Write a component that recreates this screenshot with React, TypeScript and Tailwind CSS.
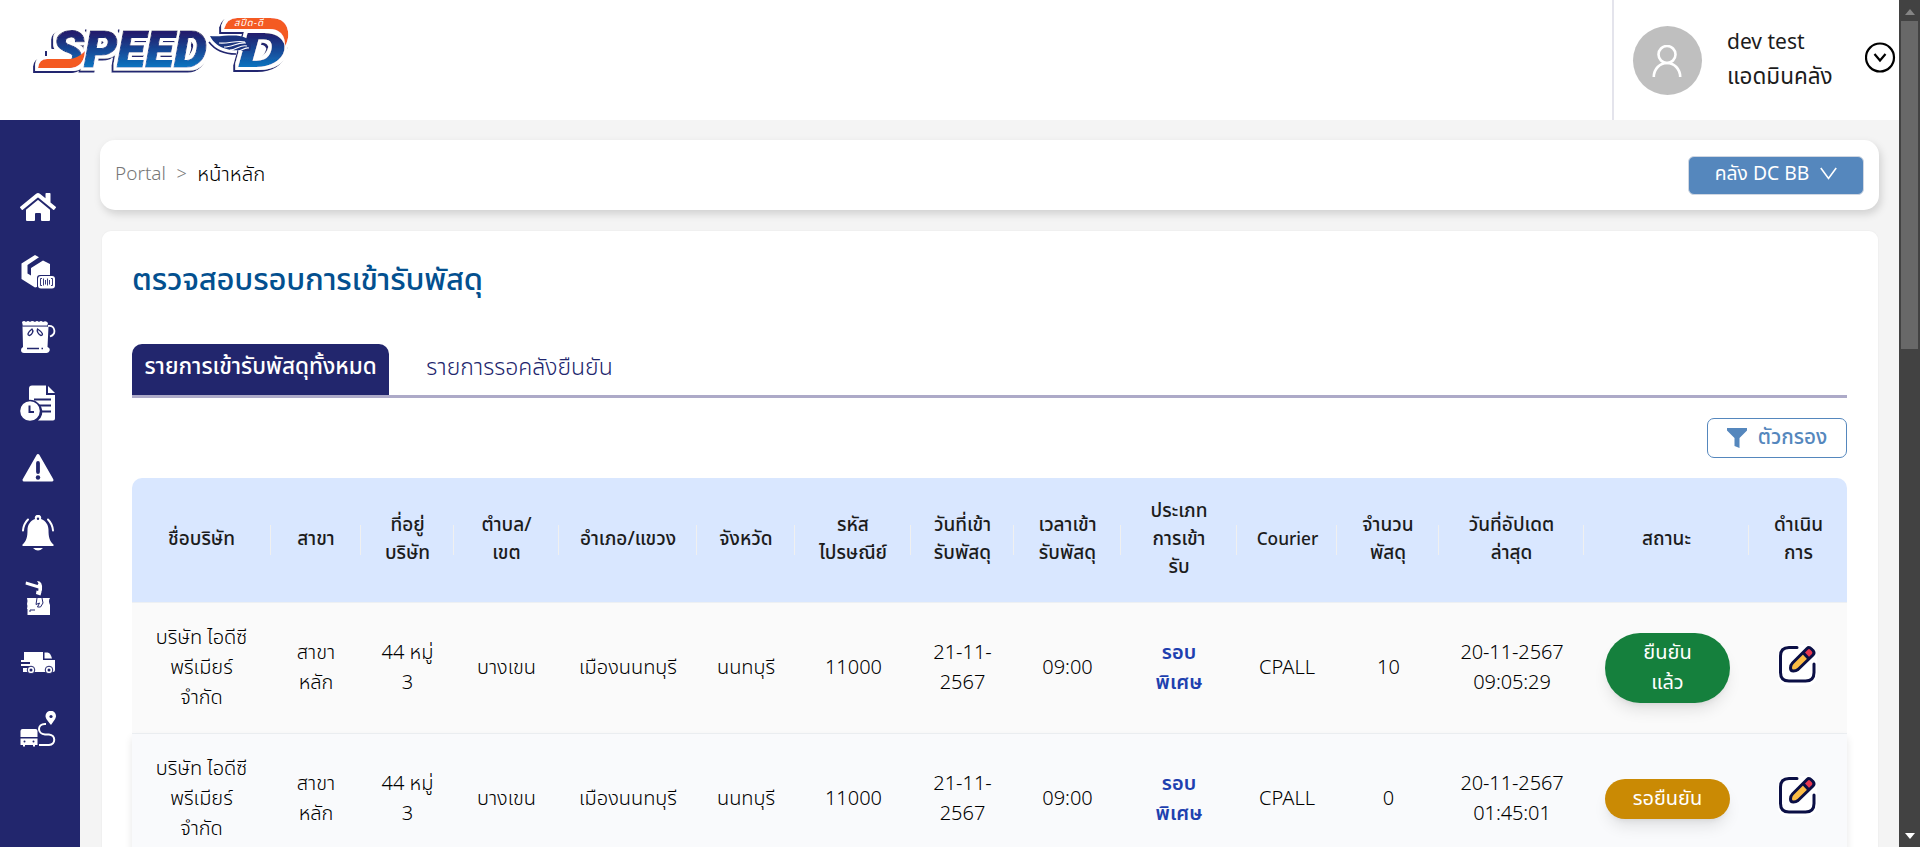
import type { ReactNode } from 'react';
import { FaHome } from 'react-icons/fa';

type Row = { count: string; time: string; status: 'confirmed' | 'waiting' };

const columns: string[][] = [
  ['ชื่อบริษัท'],
  ['สาขา'],
  ['ที่อยู่', 'บริษัท'],
  ['ตำบล/', 'เขต'],
  ['อำเภอ/แขวง'],
  ['จังหวัด'],
  ['รหัส', 'ไปรษณีย์'],
  ['วันที่เข้า', 'รับพัสดุ'],
  ['เวลาเข้า', 'รับพัสดุ'],
  ['ประเภท', 'การเข้า', 'รับ'],
  ['Courier'],
  ['จำนวน', 'พัสดุ'],
  ['วันที่อัปเดต', 'ล่าสุด'],
  ['สถานะ'],
  ['ดำเนิน', 'การ'],
];

const rows: Row[] = [
  { count: '10', time: '09:05:29', status: 'confirmed' },
  { count: '0', time: '01:45:01', status: 'waiting' },
];

const grid =
  'grid grid-cols-[139px_90px_93px_105px_138px_98px_116px_103px_107px_116px_100px_102px_145px_165px_98px]';

function Logo() {
  return (
    <svg width="262" height="66" viewBox="0 0 262 66" className="ml-[33px] mt-[14px]">
      <defs>
        <linearGradient id="blue" x1="0" y1="14" x2="0" y2="54" gradientUnits="userSpaceOnUse">
          <stop offset="0.15" stopColor="#211f6e" />
          <stop offset="1" stopColor="#0c76c2" />
        </linearGradient>
        <filter id="edge" x="-5%" y="-20%" width="110%" height="140%">
          <feMorphology in="SourceAlpha" operator="dilate" radius="3.2" result="wide" />
          <feFlood floodColor="#ffffff" />
          <feComposite in2="wide" operator="in" result="white" />
          <feOffset in="wide" dx="-1.6" dy="2" result="moved" />
          <feFlood floodColor="#22266f" />
          <feComposite in2="moved" operator="in" result="navy" />
          <feMerge>
            <feMergeNode in="navy" />
            <feMergeNode in="white" />
            <feMergeNode in="SourceGraphic" />
          </feMerge>
        </filter>
      </defs>
      <g filter="url(#edge)">
        <g fontFamily="Roboto, Liberation Sans, sans-serif" fontWeight="900" fontStyle="italic" fill="url(#blue)">
          <text x="19" y="53" fontSize="50" textLength="155" lengthAdjust="spacingAndGlyphs" stroke="url(#blue)" strokeWidth="1">SPEED</text>
          <text x="205" y="53" fontSize="48" textLength="48" lengthAdjust="spacingAndGlyphs">D</text>
        </g>
        <path d="M17 38l18 1v7H17z" fill="#fff" />
        <path d="M5 54q1-9 9-9h22q8 0 16-8-1 17-16 17z" fill="#f45a22" />
        <path d="M191 15Q194 4 204 4h33q20 0 18 20-1 5-3 8 0-17-16-17z" fill="#f45a22" />
      </g>
      <path d="M177 22c14 1 26-3 36 2 5 3 6 8 4 13-18 0-33-1-40-15z" fill="#1b3580" />
      <path d="M186 29c9 1 18-3 26-1M191 33c8 0 14-5 22-4M197 36c6 0 11-6 17-4M205 37c4 0 6-4 11-3" stroke="#fff" strokeWidth="1.1" fill="none" />
      <path d="M176 28c6 8 14 12 27 12" stroke="#22266f" strokeWidth="1.600" fill="none" />
      <text x="201" y="12" fontSize="9.500" textLength="29" fill="#fff" fontStyle="italic" fontFamily="Noto Sans Thai, Noto Sans, sans-serif">สปีด-ดี</text>
    </svg>
  );
}

function SideIcon({ children }: { children: ReactNode }) {
  return (
    <svg viewBox="0 0 36 36" className="size-9 fill-white stroke-none">
      {children}
    </svg>
  );
}

function Sidebar() {
  const c = '#22266d';
  return (
    <nav className="flex w-20 shrink-0 flex-col items-center gap-[29.2px] bg-[#22266d] pt-[69px] pr-[5px]">
      <FaHome className="size-9 text-white" />
      <SideIcon>
        <path d="M1.500 9.500 15 1l4 2.200L7.500 11v8.500l3.500 2V14L23 6.500l7 3.500v11H20q-3 0-3 3v9l-2 .5L1.500 25z" />
        <rect x="18" y="22" width="17" height="12.500" rx="3" />
        <path d="M22 24.500h-1.500v7H22M31 24.500h1.500v7H31M23.500 24.500v7M25.500 26v4.500M27.500 24.500v7M29.500 26v4.500" fill="none" stroke={c} strokeWidth="0.900" />
      </SideIcon>
      <SideIcon>
        <path d="M2 3q2-2 4 0 2-2 4 0 2-2 5 0 2-2 4 0 2-2 4 0 3-2 5 1l-1 3.500H3z" />
        <path d="M2.500 7.500h26l-1 20.500q3 1 2 4-1 2-3 2H4q-3 0-3-3 0-2 2-3z" />
        <path d="M3 7h25" stroke={c} strokeWidth="0.900" />
        <path d="M28 7c7-1 9 8 2 10.500" fill="none" stroke="#fff" strokeWidth="1.800" />
        <path d="M12 10c2 2 0 6-2.500 6.500-2.500 0-2-3 2.500-6.500zM17.500 10c-1 2 1 6 3.500 6.500 2.500 0 2-3-3.500-6.500zM7 29.500h12M21.500 29.500h1.500" fill="none" stroke={c} strokeWidth="1.300" />
      </SideIcon>
      <SideIcon>
        <path d="M12 .5h14V10h9v23.500q0 2-2 2H18A11 11 0 0 0 9 16V3.500q0-3 3-3z" />
        <path d="M28 1l7 7h-7z" />
        <path d="M14 14.500h17M19 20.500h12M22 26.500h9" stroke={c} strokeWidth="1.800" />
        <circle cx="10" cy="26" r="10.500" stroke={c} strokeWidth="1.400" />
        <path d="M9.500 20.500V27H14" fill="none" stroke={c} strokeWidth="2" />
      </SideIcon>
      <SideIcon>
        <path d="M18 5.500 32 30H4z" stroke="#fff" strokeWidth="3" strokeLinejoin="round" />
        <path d="M18 13v9" stroke={c} strokeWidth="3.800" strokeLinecap="round" />
        <circle cx="18" cy="27.500" r="2.200" fill={c} />
      </SideIcon>
      <SideIcon>
        <path d="M15 4a3.200 3.200 0 1 1 6 0c5 2 7.500 6 7.500 11 0 7 1 11 5 14.500v1.500H2.500v-1.500C6.500 26 7.500 22 7.500 15c0-5 2.500-9 7.500-11zM13 33h10q-5 5-10 0z" />
        <circle cx="18" cy="3.800" r="1.200" fill={c} />
        <path d="M8 4.500Q3.500 9 3 15.500M28 4.500Q32.500 9 33 15.500" fill="none" stroke="#fff" strokeWidth="2" strokeLinecap="round" />
      </SideIcon>
      <SideIcon>
        <path d="M6 1.500l11.500 3.500 1-1.500L17 1q6 0 5 9l-1 3-3-.5.500-4L5.500 4.500zM16.500 10.500l5 1.500-1 3.500-4.500-1.500z" />
        <path d="M7 18h23q-2 3 0 7v10H7.500v-6H7q1-3 0-5 1-3 0-6z" />
        <path d="M17 18l-1 6.500 3.500-1.500-2 4h3l2.500-4-1-5M10 32v-2h5" stroke={c} strokeWidth="1" fill="none" />
      </SideIcon>
      <SideIcon>
        <path d="M4 7h19v8h12v10q0 2-2 2H3v-4h7v-2H1v-2h9v-2H1v-2h3z" />
        <path d="M24.500 7.500h3q3 0 4.500 6h-7.500z" />
        <circle cx="11" cy="25" r="3.800" stroke={c} strokeWidth="1" />
        <circle cx="29" cy="25" r="3.800" stroke={c} strokeWidth="1" />
        <circle cx="11" cy="25" r="1.500" fill={c} />
        <circle cx="29" cy="25" r="1.500" fill={c} />
      </SideIcon>
      <SideIcon>
        <path d="M.5 20q0-2 2-2h13q2 0 2 2v6H.5zM.5 27.500h17V34H15v1.500h-2V34H5v1.500H3V34H.5z" />
        <circle cx="4.500" cy="30.500" r="1" fill={c} />
        <circle cx="13.500" cy="30.500" r="1" fill={c} />
        <path d="M31 14c-4-5-5.500-7-5.500-9A5.200 5.200 0 0 1 36 5c0 2-1.500 4-5 9z" />
        <circle cx="31" cy="5.500" r="1.600" fill={c} />
        <path d="M26 13h-1c-8 0-8 10 0 10.500h4c7 .5 7 10 0 10.500H19" fill="none" stroke="#fff" strokeWidth="2" />
      </SideIcon>
    </nav>
  );
}

function EditIcon() {
  return (
    <svg width="40" height="44" viewBox="0 0 40 44">
      <rect x="0" y="2" width="39" height="41" rx="10" fill="#fff" />
      <path d="M19 4.500H11Q2.500 4.500 2.500 13v16.500Q2.500 38 11 38h16.500q8.500 0 8.500-8.500V21" fill="none" stroke="#0b0f45" strokeWidth="3" strokeLinecap="round" />
      <path d="M25 9.500 29 5.500q2-2 4.500.5l1.500 1.500q2 2.500 0 4.500l-4 4z" fill="#e8384f" />
      <path d="M14.500 20 25 9.500l6 6.500-11 10.500q-2 1.500-4.500 1.500-3 0-3-3 0-3 2-5z" fill="#fbbc45" />
      <path d="M14.500 20 29 5.500q2-2 4.500.5l1.500 1.500q2 2.500 0 4.500L20 26.500q-2 1.500-4.500 1.500-3 0-3-3 0-3 2-5zM25 9.500l6 6.500" fill="none" stroke="#0b0f45" strokeWidth="3" strokeLinejoin="round" />
    </svg>
  );
}

function Cell({ children, className = '' }: { children: ReactNode; className?: string }) {
  return <div className={`flex flex-col items-center justify-center whitespace-nowrap ${className}`}>{children}</div>;
}

function TableRow({ row, raised }: { row: Row; raised: boolean }) {
  return (
    <div
      className={`${grid} h-[131px] shrink-0 border-b border-[#edf0f3] text-[20px] font-light leading-[30px] text-black ${
        raised ? 'bg-[#f9fafc] shadow-[0_4px_8px_rgba(0,0,0,0.1)]' : 'bg-[#fafafa]'
      }`}
    >
      <Cell>
        <span>บริษัท ไอดีซี</span>
        <span>พรีเมียร์</span>
        <span>จำกัด</span>
      </Cell>
      <Cell>
        <span>สาขา</span>
        <span>หลัก</span>
      </Cell>
      <Cell>
        <span>44 หมู่</span>
        <span>3</span>
      </Cell>
      <Cell>บางเขน</Cell>
      <Cell>เมืองนนทบุรี</Cell>
      <Cell>นนทบุรี</Cell>
      <Cell className="pl-px">11000</Cell>
      <Cell>
        <span>21-11-</span>
        <span>2567</span>
      </Cell>
      <Cell>09:00</Cell>
      <Cell className="font-semibold text-[#1e40af]">
        <span>รอบ</span>
        <span>พิเศษ</span>
      </Cell>
      <Cell>CPALL</Cell>
      <Cell className="pl-px">{row.count}</Cell>
      <Cell className="pl-px tracking-[-0.1px]">
        <span>20-11-2567</span>
        <span>{row.time}</span>
      </Cell>
      <Cell className="pl-[2px]">
        {row.status === 'confirmed' ? (
          <div className="flex h-[70px] w-[125px] flex-col items-center justify-center rounded-[35px] bg-[#15803d] font-normal text-white shadow-lg">
            <span>ยืนยัน</span>
            <span>แล้ว</span>
          </div>
        ) : (
          <div className="flex h-10 w-[125px] items-center justify-center rounded-[20px] bg-[#ca8a04] font-normal text-white shadow-lg">
            รอยืนยัน
          </div>
        )}
      </Cell>
      <Cell className="pb-[6px]">
        <EditIcon />
      </Cell>
    </div>
  );
}

export default function App() {
  return (
    <div className="flex h-[847px] w-[1920px] overflow-hidden bg-[#f4f4f4] font-['Noto_Sans_Thai','Noto_Sans',sans-serif]">
      <div className="flex w-[1899px] flex-col">
        <header className="flex h-[120px] shrink-0 justify-between bg-white">
          <Logo />
          <div className="flex w-[287px] border-l-2 border-[#e4e4ec] pl-[19px]">
            <div className="mt-[26px] flex size-[69px] items-center justify-center rounded-full bg-[#bfbfbf]">
              <svg width="32" height="32" viewBox="0 0 32 32" fill="none" stroke="#fff" strokeWidth="2.600">
                <circle cx="15" cy="9.500" r="8.500" />
                <path d="M1.800 32c0-8 6-14 13.200-14s13.200 6 13.200 14" />
              </svg>
            </div>
            <div className="ml-[25px] mt-[26px] w-[138px] text-[21px] leading-[34px] text-[#1c1c1c]">
              <p>dev test</p>
              <p className="text-[22.500px]">แอดมินคลัง</p>
            </div>
            <svg width="31" height="31" viewBox="0 0 31 31" className="mt-[41.500px] shrink-0" fill="none" stroke="#000">
              <circle cx="15" cy="15.500" r="14" strokeWidth="2.200" />
              <path d="M9.500 12l5.500 6.500L20.500 12" strokeWidth="2.200" />
            </svg>
          </div>
        </header>

        <div className="flex min-h-0 flex-1">
          <Sidebar />
          <main className="flex flex-1 flex-col pl-5 pt-5">
            <div className="flex h-[70px] w-[1779px] shrink-0 items-center justify-between rounded-[15px] bg-white pl-[15px] pr-[15px] shadow-[2px_4px_8px_rgba(0,0,0,0.15)]">
              <div className="flex items-center text-[20.400px] font-light text-black">
                <span className="text-[19px] text-[#777]">Portal</span>
                <span className="mx-[10.500px] text-[18px] text-[#777]">&gt;</span>
                <span>หน้าหลัก</span>
              </div>
              <div className="flex h-[39px] w-[176px] items-center justify-center gap-3 rounded-[6px] border border-[#d0d7e2] bg-[#5587bd] text-[19.300px] text-white">
                <span>คลัง DC BB</span>
                <svg width="17" height="13" viewBox="0 0 17 13" fill="none" stroke="#fff" strokeWidth="1.600" className="mb-[3px] -ml-px">
                  <path d="M.8 1l7.700 10.500L16.200 1" />
                </svg>
              </div>
            </div>

            <section className="mt-[20px] ml-px flex w-[1778px] flex-1 flex-col rounded-t-[10px] border border-b-0 border-[#f0f0f0] bg-white pl-[30px] pr-[30px]">
              <h1 className="mt-[27px] text-[31px] font-medium leading-[46px] tracking-[-0.180px] text-[#03508f]">ตรวจสอบรอบการเข้ารับพัสดุ</h1>
              <div className="mt-[40px] flex h-[54px] w-[1715px] shrink-0 border-b-[3px] border-[#adaac8]">
                <div className="flex w-[257px] items-center justify-center rounded-t-[10px] bg-[#22266d] pb-[3px] text-[22.500px] font-medium text-white">
                  รายการเข้ารับพัสดุทั้งหมด
                </div>
                <div className="flex w-[261px] items-center justify-center pb-[3px] text-[23px] font-light text-[#22266d]">
                  รายการรอคลังยืนยัน
                </div>
              </div>
              <div className="mt-5 flex h-10 w-[1715px] shrink-0 justify-end">
                <div className="flex w-[140px] items-center justify-center gap-[11px] rounded-[7px] border border-[#5587bd] text-[20.600px] font-medium text-[#5587bd]">
                  <svg width="20" height="20" viewBox="0 0 20 20" fill="#5587bd">
                    <path d="M0 0h20v2.500L12.500 10v10L7.500 18v-8L0 2.500z" />
                  </svg>
                  <span>ตัวกรอง</span>
                </div>
              </div>
              <div className={`${grid} mt-5 h-[125px] w-[1715px] shrink-0 rounded-t-[10px] border-b border-[#edf0f3] bg-[#d9e7ff]`}>
                {columns.map((lines, i) => (
                  <div key={i} className="flex items-center">
                    <div className={`flex flex-1 flex-col items-center whitespace-nowrap font-medium leading-[28px] text-[#1c1c1c] ${lines[0] === 'Courier' ? 'pl-[2px] text-[17.300px]' : 'pl-px text-[19px]'}`}>
                      {lines.map((l) => (
                        <span key={l}>{l}</span>
                      ))}
                    </div>
                    {i < columns.length - 1 && <div className="h-[30px] w-px bg-[#f0f0f0]" />}
                  </div>
                ))}
              </div>
              <div className="flex w-[1715px] flex-col">
                {rows.map((r, i) => (
                  <TableRow key={r.time} row={r} raised={i === 1} />
                ))}
              </div>
            </section>
          </main>
        </div>
      </div>

      <div className="flex w-[21px] flex-col items-center bg-[#424242]">
        <svg width="10" height="6" viewBox="0 0 10 6" className="mt-[9px]" fill="#858585">
          <path d="M5 0l5 6H0z" />
        </svg>
        <div className="mt-[6px] h-[328px] w-[17px] bg-[#686868]" />
        <svg width="10" height="6" viewBox="0 0 10 6" className="mt-auto mb-[8px]" fill="#fff">
          <path d="M5 6L0 0h10z" />
        </svg>
      </div>
    </div>
  );
}
